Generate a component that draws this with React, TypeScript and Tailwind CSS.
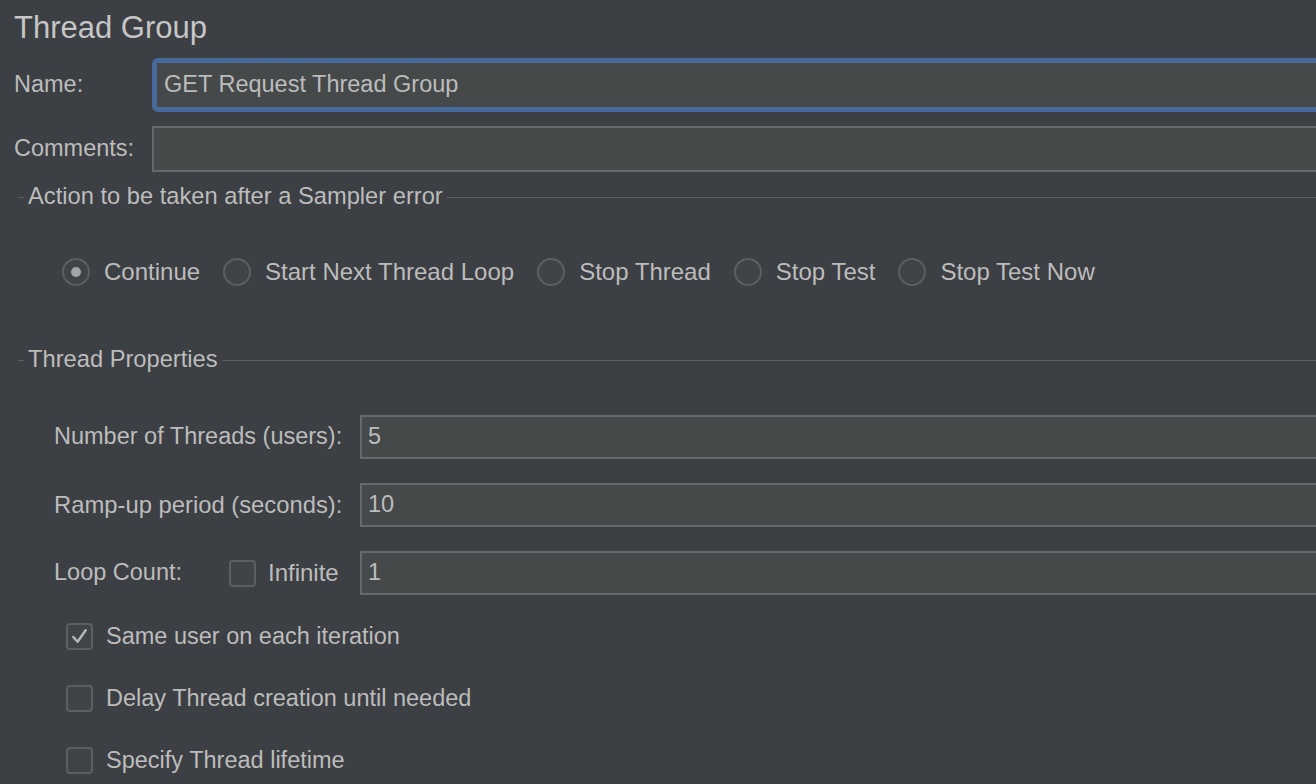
import React from 'react';

const labelText = 'text-[23.5px] leading-none whitespace-nowrap';

function Radio({ label, checked = false }: { label: string; checked?: boolean }) {
  return (
    <div className="flex items-center gap-[14px]">
      <div className="w-[28px] h-[28px] rounded-full border-2 border-[#5c5f62] bg-[#414447] flex items-center justify-center">
        {checked && <div className="w-[10px] h-[10px] rounded-full bg-[#a3a5a7]" />}
      </div>
      <span className="text-[24px] leading-none whitespace-nowrap">{label}</span>
    </div>
  );
}

function Checkbox({ checked = false }: { checked?: boolean }) {
  return (
    <div className="w-[27px] h-[27px] rounded-[4px] border-2 border-[#5c5f62] bg-[#414447] flex items-center justify-center shrink-0">
      {checked && (
        <svg width="19" height="19" viewBox="0 0 20 20" fill="none">
          <path d="M3.5 10.5 L8 15.5 L16.5 3.5" stroke="#b4b6b8" strokeWidth="2.6" strokeLinecap="round" strokeLinejoin="round" />
        </svg>
      )}
    </div>
  );
}

function Section({ title }: { title: string }) {
  return (
    <div className="flex items-center h-[24px]">
      <div className="ml-[18px] w-[6px] h-px bg-[#5b5e62]" />
      <span className="text-[23.7px] leading-none whitespace-nowrap px-[4px]">{title}</span>
      <div className="flex-1 h-px bg-[#5b5e62]" />
    </div>
  );
}

function Field({ value }: { value: string }) {
  return (
    <div className="flex-1 h-[44px] border-2 border-[#66696b] bg-[#45494a] flex items-center pl-[6px]">
      <span className={labelText}>{value}</span>
    </div>
  );
}

export default function App() {
  return (
    <div className="w-[1316px] h-[784px] overflow-hidden bg-[#3c3f43] text-[#bcbcbc] font-['Liberation_Sans',Arial,sans-serif]">
      <div className="w-[1340px]">
        <div className="pl-[14px] pt-[9px] h-[43px] text-[31px] leading-[37px] text-[#c6c6c6]">Thread Group</div>

        <div className="mt-[15px] flex items-center h-[54px]">
          <span className={`${labelText} w-[152px] pl-[14px]`}>Name:</span>
          <div className="flex-1 h-[54px] rounded-[6px] border-[5px] border-[#46699b] bg-[#45494a] flex items-center pl-[7px]">
            <span className={labelText}>GET Request Thread Group</span>
          </div>
        </div>

        <div className="mt-[14px] flex items-center h-[46px]">
          <span className={`${labelText} w-[152px] pl-[14px]`}>Comments:</span>
          <div className="flex-1 h-[46px] border-2 border-[#66696b] bg-[#45494a]" />
        </div>

        <div className="mt-[13px]">
          <Section title="Action to be taken after a Sampler error" />
        </div>

        <div className="mt-[48px] h-[30px] pl-[62px] flex items-center gap-[23px]">
          <Radio label="Continue" checked />
          <Radio label="Start Next Thread Loop" />
          <Radio label="Stop Thread" />
          <Radio label="Stop Test" />
          <Radio label="Stop Test Now" />
        </div>

        <div className="mt-[61px]">
          <Section title="Thread Properties" />
        </div>

        <div className="mt-[43px] pl-[54px] flex flex-col gap-[24px]">
          <div className="flex items-center">
            <span className={`${labelText} w-[306px]`}>Number of Threads (users):</span>
            <Field value="5" />
          </div>
          <div className="flex items-center">
            <span className="text-[23.8px] leading-none whitespace-nowrap w-[306px]">Ramp-up period (seconds):</span>
            <Field value="10" />
          </div>
          <div className="flex items-center">
            <div className="w-[306px] flex items-center">
              <span className={`${labelText} w-[175px]`}>Loop Count:</span>
              <Checkbox />
              <span className="text-[24px] leading-none whitespace-nowrap ml-[12px]">Infinite</span>
            </div>
            <Field value="1" />
          </div>
        </div>

        <div className="mt-[28px] pl-[66px] flex flex-col gap-[35px]">
          <div className="flex items-center gap-[13px]">
            <Checkbox checked />
            <span className={labelText}>Same user on each iteration</span>
          </div>
          <div className="flex items-center gap-[13px]">
            <Checkbox />
            <span className={labelText}>Delay Thread creation until needed</span>
          </div>
          <div className="flex items-center gap-[13px]">
            <Checkbox />
            <span className={labelText}>Specify Thread lifetime</span>
          </div>
        </div>
      </div>
    </div>
  );
}
